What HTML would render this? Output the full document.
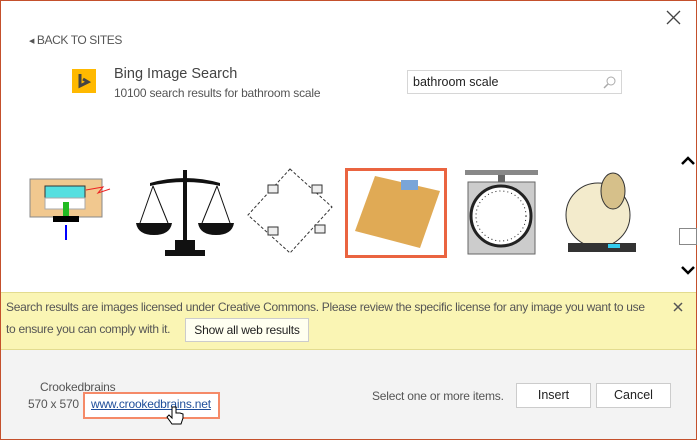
<!DOCTYPE html>
<html><head><style>
*{margin:0;padding:0;box-sizing:border-box}
body{width:697px;height:440px;overflow:hidden;font-family:"Liberation Sans",sans-serif;background:#fff;position:relative}
.frame{position:absolute;left:0;top:0;width:697px;height:440px;border:1px solid #c4502c;}
.a{position:absolute;white-space:nowrap}
</style></head><body>
<div class="a" style="left:0;top:0;width:697px;height:292px;background:#fff"></div>
<div class="a" style="left:0;top:292px;width:697px;height:58px;background:#faf5b4;border-top:1px solid #e3dc8f;border-bottom:1px solid #e3dc8f"></div>
<div class="a" style="left:0;top:350px;width:697px;height:90px;background:#f3f3f3"></div>
<div class="frame"></div>

<svg class="a" style="left:666px;top:10px" width="15" height="15"><path d="M1 1L14 14M14 1L1 14" stroke="#444" stroke-width="1.3"/></svg>
<div class="a" style="left:29px;top:33px;font-size:12px;letter-spacing:-0.4px;color:#555"><span style="font-size:7px;position:relative;top:-1px">◀</span> BACK TO SITES</div>
<div class="a" style="left:72px;top:69px;width:24px;height:24px;background:#ffb900"></div>
<svg class="a" style="left:72px;top:69px" width="24" height="24"><path d="M8 5V17L16 13L11 10" stroke="#444" stroke-width="3" fill="none"/></svg>
<div class="a" style="left:114px;top:66px;font-size:14.5px;color:#444">Bing Image Search</div>
<div class="a" style="left:114px;top:86px;font-size:12px;letter-spacing:-0.2px;color:#555">10100 search results for bathroom scale</div>
<div class="a" style="left:407px;top:70px;width:215px;height:24px;border:1px solid #d6d6d6;background:#fff;font-size:12.5px;color:#222;padding:4px 0 0 5px">bathroom scale</div>
<svg class="a" style="left:603px;top:75px" width="14" height="14"><circle cx="8" cy="6" r="4" stroke="#aaa" fill="none"/><path d="M5 9L1 13" stroke="#aaa" stroke-width="1.5"/></svg>

<svg class="a" style="left:28px;top:175px" width="105" height="70">
<rect x="2" y="4" width="72" height="38" fill="#f1c88f" stroke="#888"/>
<rect x="17" y="11" width="40" height="12" fill="#55dfe0" stroke="#333"/>
<rect x="17" y="23" width="40" height="11" fill="#fff" stroke="#aaa"/>
<rect x="35" y="27" width="6" height="14" fill="#2b2"/>
<rect x="25" y="41" width="26" height="6" fill="#000"/>
<path d="M38 65V50" stroke="#00f" stroke-width="2"/>
<path d="M58 15L75 12L70 18L82 14" stroke="#e22" fill="none"/>
</svg>
<svg class="a" style="left:135px;top:168px" width="100" height="90" viewBox="0 0 100 90">
<path d="M48 2h4v80h-4z M15 15Q50 5 85 15v3Q50 10 15 18z" fill="#111"/>
<path d="M18 18L5 55M18 18L33 55M82 18L67 55M82 18L95 55" stroke="#111"/>
<path d="M1 55h36q-2 12-18 12t-18-12zM63 55h36q-2 12-18 12t-18-12z" fill="#111"/>
<path d="M30 82h40v6H30z M40 72h20v10H40z" fill="#111"/>
</svg>
<svg class="a" style="left:240px;top:165px" width="100" height="95">
<path d="M50 4L92 42L50 88L8 50Z" stroke="#333" fill="none" stroke-dasharray="3 2"/>
<rect x="28" y="20" width="10" height="8" fill="#eee" stroke="#333"/><rect x="72" y="20" width="10" height="8" fill="#eee" stroke="#333"/>
<rect x="28" y="62" width="10" height="8" fill="#eee" stroke="#333"/><rect x="75" y="60" width="10" height="8" fill="#eee" stroke="#333"/>
</svg>
<div class="a" style="left:345px;top:168px;width:102px;height:90px;border:3px solid #ea6440;background:#fff"></div>
<svg class="a" style="left:350px;top:173px" width="92" height="80"><path d="M25 3L90 18L70 75L5 58Z" fill="#e0aa55"/><rect x="51" y="7" width="17" height="10" fill="#7aa5d8"/></svg>
<svg class="a" style="left:465px;top:168px" width="75" height="90">
<rect x="0" y="2" width="73" height="5" fill="#888"/><rect x="33" y="7" width="7" height="8" fill="#666"/>
<rect x="3" y="14" width="67" height="72" fill="#ccc" stroke="#666"/>
<circle cx="36" cy="48" r="30" fill="#fff" stroke="#222" stroke-width="3"/><circle cx="36" cy="48" r="25" fill="none" stroke="#222" stroke-dasharray="1 3"/>
</svg>
<svg class="a" style="left:558px;top:163px" width="95" height="95">
<ellipse cx="40" cy="52" rx="32" ry="32" fill="#f3ebcc" stroke="#333"/>
<ellipse cx="55" cy="28" rx="12" ry="18" fill="#d6c08a" stroke="#333"/>
<rect x="10" y="80" width="68" height="9" fill="#333"/><rect x="50" y="81" width="12" height="4" fill="#3ce"/>
</svg>

<svg class="a" style="left:681px;top:156px" width="14" height="10"><path d="M1 8L7 2L13 8" stroke="#000" stroke-width="2.5" fill="none"/></svg>
<div class="a" style="left:679px;top:228px;width:18px;height:17px;border:1px solid #888;background:#fff"></div>
<svg class="a" style="left:681px;top:265px" width="14" height="10"><path d="M1 2L7 8L13 2" stroke="#000" stroke-width="2.5" fill="none"/></svg>

<div class="a" style="left:6px;top:300px;font-size:12px;letter-spacing:-0.3px;color:#555">Search results are images licensed under Creative Commons. Please review the specific license for any image you want to use</div>
<div class="a" style="left:6px;top:322px;font-size:12px;letter-spacing:-0.3px;color:#555">to ensure you can comply with it.</div>
<div class="a" style="left:185px;top:318px;width:124px;height:24px;border:1px solid #ccc;background:#fffff0;font-size:12px;letter-spacing:-0.2px;color:#222;text-align:center;line-height:22px">Show all web results</div>
<svg class="a" style="left:673px;top:302px" width="10" height="10"><path d="M1 1L9 9M9 1L1 9" stroke="#555" stroke-width="1.5"/></svg>

<div class="a" style="left:40px;top:380px;font-size:12px;letter-spacing:-0.2px;color:#555">Crookedbrains</div>
<div class="a" style="left:28px;top:397px;font-size:12px;letter-spacing:-0.2px;color:#555">570 x 570 ·</div>
<div class="a" style="left:83px;top:392px;width:137px;height:27px;border:2px solid #f58a68;background:#fff"></div>
<div class="a" style="left:91px;top:397px;font-size:12px;letter-spacing:-0.2px;color:#1f4e9a;text-decoration:underline">www.crookedbrains.net</div>
<svg class="a" style="left:165px;top:405px" width="20" height="22"><path d="M7 2v11l-3-3-2 2 5 7h9l2-6v-4l-3-1-2 0-2 0V2z" fill="#fff" stroke="#000"/></svg>
<div class="a" style="left:372px;top:389px;font-size:12px;letter-spacing:-0.2px;color:#555">Select one or more items.</div>
<div class="a" style="left:516px;top:383px;width:75px;height:25px;border:1px solid #ccc;background:#fff;font-size:12.5px;text-align:center;line-height:23px;color:#222">Insert</div>
<div class="a" style="left:596px;top:383px;width:75px;height:25px;border:1px solid #ccc;background:#fff;font-size:12.5px;text-align:center;line-height:23px;color:#222">Cancel</div>
</body></html>
